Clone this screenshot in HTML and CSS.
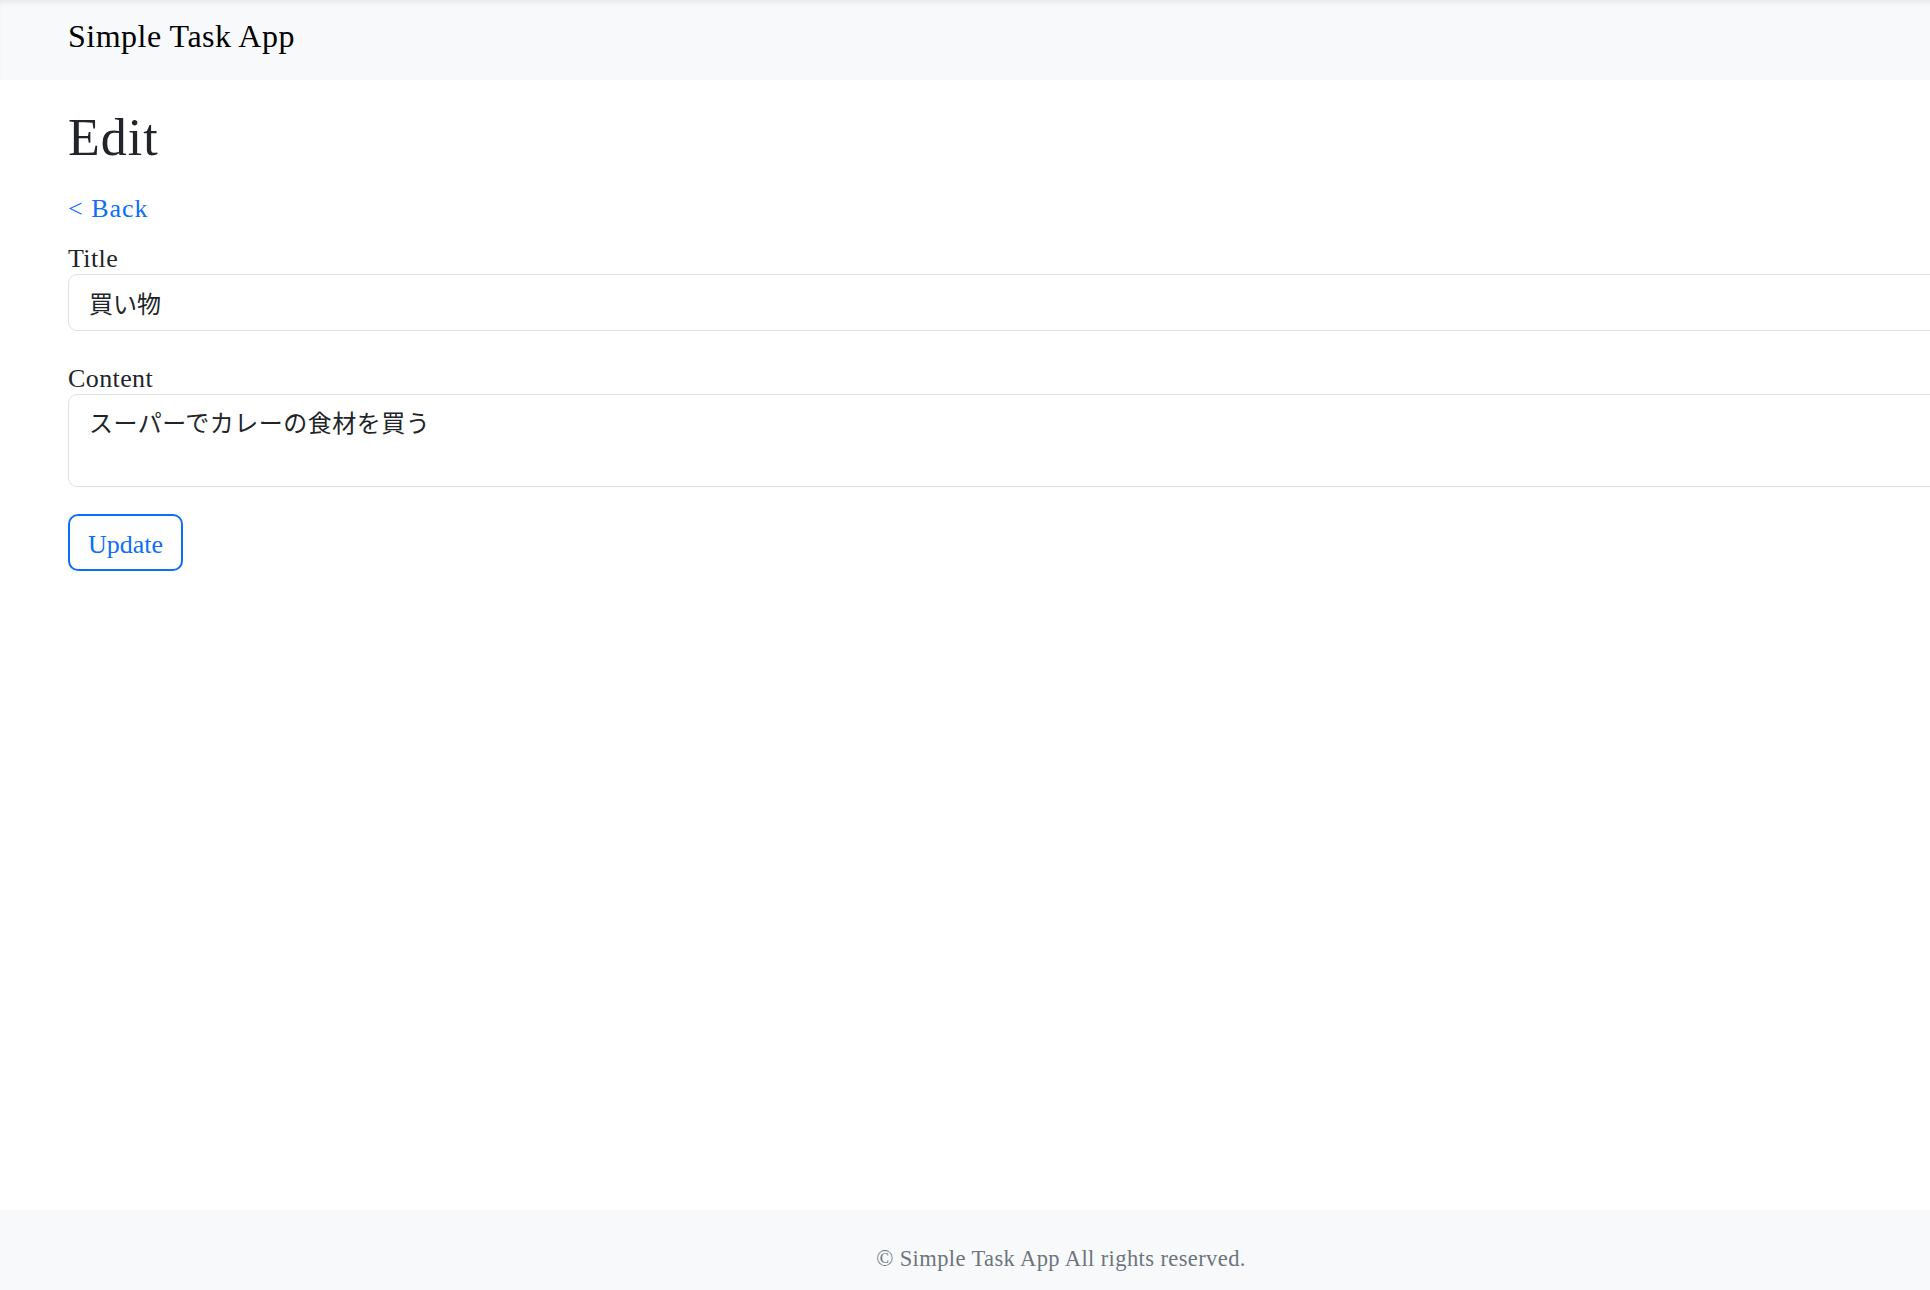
FILE: index.html
```html
<!DOCTYPE html>
<html lang="ja">
<head>
    <meta charset="UTF-8">
    <meta name="viewport" content="width=device-width, initial-scale=1.0">
    <title>Simple Task App</title>
    <link rel="stylesheet" href="styles.css">
</head>
<body>
    <div class="page">
        <nav class="navbar">
            <a class="navbar-brand" href="#">Simple Task App</a>
        </nav>
        <main class="container">
            <h1 class="page-title">Edit</h1>
            <a class="back-link" href="#">&lt; Back</a>
            <form class="task-form">
                <div class="form-group">
                    <label class="form-label" for="title">Title</label>
                    <input class="form-control" type="text" id="title" value="買い物">
                </div>
                <div class="form-group">
                    <label class="form-label" for="content">Content</label>
                    <textarea class="form-control form-textarea" id="content">スーパーでカレーの食材を買う</textarea>
                </div>
                <button class="btn-update" type="button">Update</button>
            </form>
        </main>
        <footer class="footer">
            <p>&copy; Simple Task App All rights reserved.</p>
        </footer>
    </div>
</body>
</html>
```

FILE: styles.css
```css
*{
    margin: 0;
    padding: 0;
    box-sizing: border-box;
}

html, body{
    overflow: hidden;
}

body{
    font-family: "Liberation Serif", "Noto Sans CJK JP", serif;
    font-size: 26px;
    letter-spacing: 0.4px;
    color: #212529;
    background: #fff;
}

a{
    text-decoration: none;
}

.page{
    width: 2122px;
    min-height: 100vh;
    display: flex;
    flex-direction: column;
}

.navbar{
    height: 80px;
    padding: 12px 68px 0;
    background: #f8f9fa;
    box-shadow: inset 0 5px 6px -3px rgba(0, 0, 0, 0.08);
}

.navbar-brand{
    font-size: 32px;
    line-height: 48px;
    letter-spacing: 0.5px;
    color: #000;
}

.container{
    flex: 1;
    padding: 27px 68px 0;
}

.page-title{
    font-size: 52px;
    font-weight: normal;
    line-height: 1.2;
    letter-spacing: 1px;
    margin-bottom: 20px;
}

.back-link{
    display: block;
    line-height: 39px;
    letter-spacing: 1px;
    color: #0d6efd;
    margin-bottom: 10px;
}

.form-group{
    margin-bottom: 27px;
}

.form-label{
    display: block;
    line-height: 30px;
    padding-top: 6px;
}

.form-control{
    display: block;
    width: 100%;
    height: 57px;
    padding: 0 20px;
    font-family: "Noto Sans CJK JP", sans-serif;
    font-size: 24px;
    color: #212529;
    border: 1.5px solid #dee2e6;
    border-radius: 9px;
    background: #fff;
    outline: none;
}

.form-textarea{
    height: 93px;
    padding: 9px 20px;
    line-height: 36px;
    letter-spacing: 0.5px;
    resize: none;
}

.btn-update{
    width: 115px;
    height: 57px;
    padding-top: 5px;
    font-family: "Liberation Serif", serif;
    font-size: 26px;
    color: #0d6efd;
    background: #fff;
    border: 2px solid #0d6efd;
    border-radius: 10px;
}

.footer{
    height: 80px;
    padding-top: 32px;
    background: #f8f9fa;
    text-align: center;
    font-size: 22.5px;
    line-height: 1.5;
    color: #6c757d;
}
```
